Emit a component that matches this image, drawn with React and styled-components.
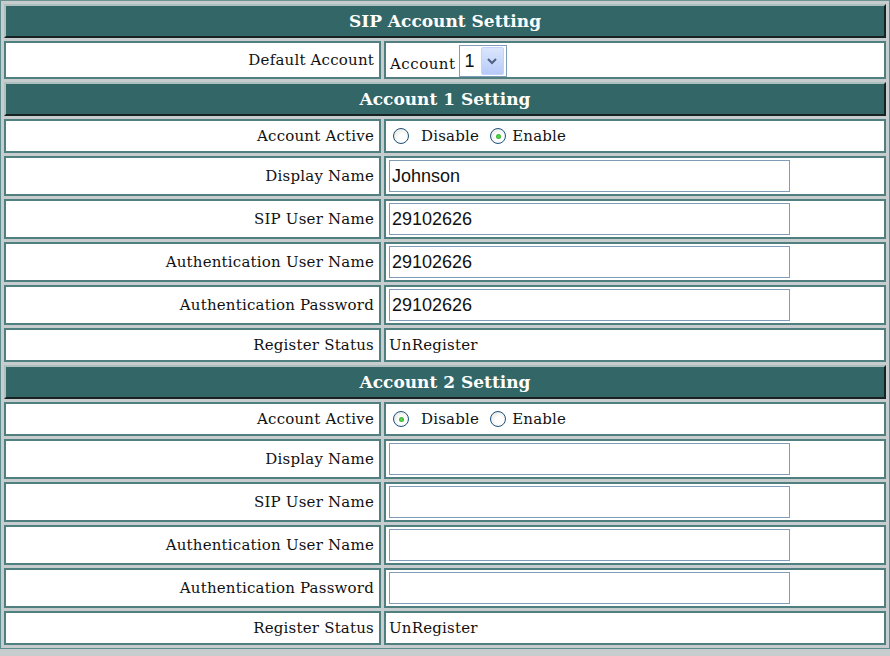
import React from 'react'
import styled, { createGlobalStyle } from 'styled-components'

const Global = createGlobalStyle`
    body {
        margin: 0;
        background: #c7cccf;
        font-family: "DejaVu Serif", "Liberation Serif", serif;
    }
`

const Table = styled.table`
    width: 890px;
    border-collapse: separate;
    border-spacing: 3px;
    background: #c7cccf;
    border: 1px solid #5f8d8d;
    border-top-color: #6e9393;
    table-layout: fixed;
    font-family: "DejaVu Serif", "Liberation Serif", serif;
    font-size: 15px;
`

const HeaderCell = styled.th`
    height: 30px;
    padding: 0;
    background: #336666;
    color: #ffffff;
    font-family: "DejaVu Serif", "Liberation Serif", serif;
    font-size: 17px;
    font-weight: bold;
    text-align: center;
    border: 2px solid;
    border-color: #aebfbf #182222 #182222 #aebfbf;
`

const Cell = styled.td`
    height: ${p => p.$h}px;
    padding: 0 5px 0 3px;
    background: #ffffff;
    border: 2px solid #4f7f7f;
    font-family: "DejaVu Serif", "Liberation Serif", serif;
    font-size: 15px;
    letter-spacing: 0.2px;
    color: #111;
    white-space: nowrap;
`

const LabelCell = styled(Cell)`
    text-align: right;
`

const ValueCell = styled(Cell)`
    text-align: left;
`

const TextInput = styled.input`
    box-sizing: border-box;
    width: 401px;
    height: 32px;
    margin: 0;
    padding: 0 2px;
    border: 1px solid #7f9db9;
    font-family: "Liberation Sans", Arial, sans-serif;
    font-size: 18px;
    color: #111;
    outline: none;
    vertical-align: middle;
`

const AccountLine = styled.div`
    display: flex;
    align-items: flex-end;
    gap: 3px;
    padding-top: 2px;
    padding-left: 1px;
`

const AccountWord = styled.span`
    line-height: 1;
    padding-bottom: 5px;
    letter-spacing: 0.5px;
`

const SelectBox = styled.div`
    box-sizing: border-box;
    display: flex;
    align-items: center;
    width: 48px;
    height: 32px;
    border: 1px solid #7f9db9;
    padding: 2px;
    background: #fff;
`

const SelectValue = styled.span`
    flex: 1;
    padding-left: 3px;
    font-family: "Liberation Sans", Arial, sans-serif;
    font-size: 18px;
    color: #111;
`

const SelectButton = styled.span`
    display: flex;
    align-items: center;
    justify-content: center;
    width: 21px;
    height: 26px;
    border-radius: 2px;
    background: linear-gradient(#dbe6fd, #b7cbf9);
    border: 1px solid #c3d3fd;
`

const RadioGroup = styled.div`
    display: flex;
    align-items: center;
    padding-left: 4px;
`

const RadioOption = styled.label`
    display: flex;
    align-items: center;
    margin-right: ${p => p.$gap}px;
`

const RadioCircle = styled.span`
    box-sizing: border-box;
    width: 16px;
    height: 16px;
    border-radius: 50%;
    border: 1px solid #1c5180;
    background: radial-gradient(circle at 60% 60%, #ffffff 30%, #dcdcd4 100%);
    display: flex;
    align-items: center;
    justify-content: center;
    margin-right: ${p => p.$gap}px;

    &::after {
        content: '';
        width: 5px;
        height: 5px;
        border-radius: 50%;
        background: ${p => (p.$on ? 'radial-gradient(circle, #5fdc4f, #21a121)' : 'transparent')};
    }
`

const Chevron = () => (
  <svg width="10" height="8" viewBox="0 0 10 8">
    <path d="M1 2 L5 6 L9 2" fill="none" stroke="#4d6185" strokeWidth="2" />
  </svg>
)

const Row = ({ label, h = 30, children }) => (
  <tr>
    <LabelCell $h={h}>{label}</LabelCell>
    <ValueCell $h={h}>{children}</ValueCell>
  </tr>
)

const Header = ({ title }) => (
  <tr>
    <HeaderCell colSpan={2}>{title}</HeaderCell>
  </tr>
)

const Active = ({ enabled }) => (
  <RadioGroup>
    <RadioOption $gap={11}>
      <RadioCircle $on={!enabled} $gap={12} />
      Disable
    </RadioOption>
    <RadioOption $gap={0}>
      <RadioCircle $on={enabled} $gap={6} />
      Enable
    </RadioOption>
  </RadioGroup>
)

const AccountSection = ({ n, enabled, name = '', user = '' }) => (
  <>
    <Header title={`Account ${n} Setting`} />
    <Row label="Account Active">
      <Active enabled={enabled} />
    </Row>
    <Row label="Display Name" h={36}>
      <TextInput defaultValue={name} />
    </Row>
    <Row label="SIP User Name" h={36}>
      <TextInput defaultValue={user} />
    </Row>
    <Row label="Authentication User Name" h={36}>
      <TextInput defaultValue={user} />
    </Row>
    <Row label="Authentication Password" h={36}>
      <TextInput defaultValue={user} />
    </Row>
    <Row label="Register Status">UnRegister</Row>
  </>
)

export default function App() {
  return (
    <>
      <Global />
      <Table>
        <colgroup>
          <col style={{ width: 377 }} />
          <col />
        </colgroup>
        <tbody>
          <Header title="SIP Account Setting" />
          <Row label="Default Account" h={34}>
            <AccountLine>
              <AccountWord>Account</AccountWord>
              <SelectBox>
                <SelectValue>1</SelectValue>
                <SelectButton>
                  <Chevron />
                </SelectButton>
              </SelectBox>
            </AccountLine>
          </Row>
          <AccountSection n={1} enabled name="Johnson" user="29102626" />
          <AccountSection n={2} enabled={false} />
        </tbody>
      </Table>
    </>
  )
}
